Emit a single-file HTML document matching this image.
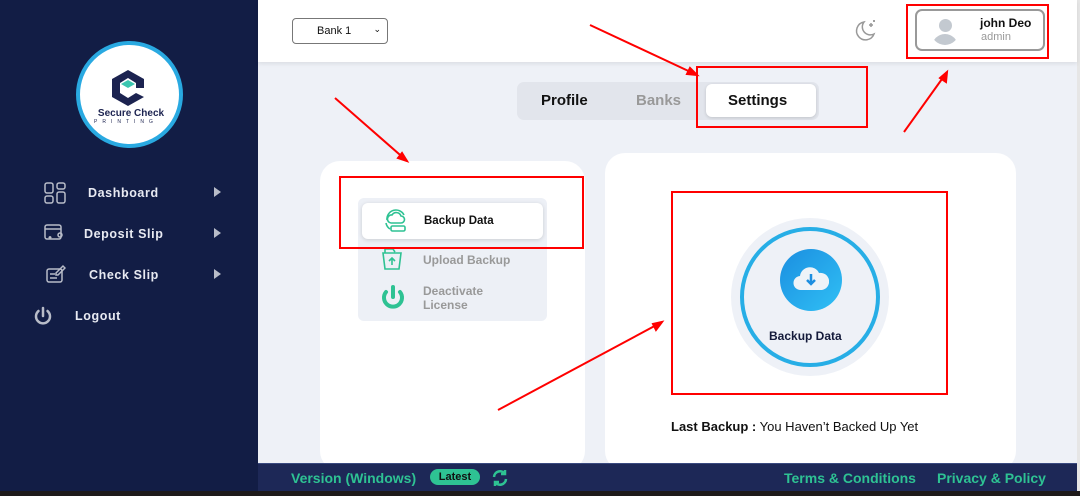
<!DOCTYPE html>
<html><head><style>
*{margin:0;padding:0;box-sizing:border-box}
body{width:1080px;height:496px;overflow:hidden;background:#eef1f7;font-family:"Liberation Sans",sans-serif;position:relative}
.abs{position:absolute}
.side{left:0;top:0;width:258px;height:496px;background:#121d45}
.nav{color:#e8eaf2;font-size:12.5px;font-weight:bold;letter-spacing:.6px}
.hdr{left:258px;top:0;width:819px;height:62px;background:#fff;box-shadow:0 2px 4px rgba(0,0,0,.08)}
.red{border:2px solid #f00}
.foot{left:258px;top:463px;width:819px;height:28px;background:#1d2857;border-top:1px solid #3a4a80}
.g{color:#2ec293;font-weight:bold;font-size:14px}
</style></head><body>
<div class="abs side">
 <div class="abs" style="left:76px;top:41px;width:107px;height:107px;border-radius:50%;background:#fff;border:4px solid #29a9e1"></div>
 <svg class="abs" style="left:108px;top:68px" width="40" height="40" viewBox="0 0 40 40"><polygon points="20,2 36,11 36,20 28,20 28,15 20,10 12,15 12,25 20,30 28,25 36,29 20,38 4,29 4,11" fill="#1c2350"/><polygon points="13,16 20,12 27,16 20,20" fill="#3bc6b0"/></svg>
 <div class="abs" style="left:81px;top:108px;width:100px;text-align:center;font-size:10px;font-weight:bold;color:#1c2350">Secure Check</div>
 <div class="abs" style="left:94px;top:119px;font-size:5px;letter-spacing:5px;color:#1c2350">PRINTING</div>
 <svg class="abs" style="left:44px;top:182px" width="22" height="22" viewBox="0 0 22 22" fill="none" stroke="#b8bcc8" stroke-width="1.5"><rect x="1" y="1" width="8" height="10" rx="2"/><rect x="13" y="1" width="8" height="6" rx="2"/><rect x="1" y="14" width="8" height="7" rx="2"/><rect x="13" y="10" width="8" height="11" rx="2"/></svg>
 <div class="abs nav" style="left:88px;top:186px">Dashboard</div>
 <svg class="abs" style="left:44px;top:224px" width="20" height="18" viewBox="0 0 20 18" fill="none" stroke="#b8bcc8" stroke-width="1.5"><rect x="1" y="1" width="16" height="14" rx="2"/><path d="M1 5h16M6 15v-3M4.5 13.5h3"/><circle cx="16" cy="11" r="2"/></svg>
 <div class="abs nav" style="left:84px;top:227px">Deposit Slip</div>
 <svg class="abs" style="left:46px;top:264px" width="20" height="20" viewBox="0 0 20 20" fill="none" stroke="#b8bcc8" stroke-width="1.5"><rect x="1" y="5" width="15" height="13" rx="2"/><path d="M4 10h5M4 14h7M10 9l7-7 2 2-7 7h-2z"/></svg>
 <div class="abs nav" style="left:89px;top:268px">Check Slip</div>
 <div class="abs" style="left:214px;top:187px;width:0;height:0;border-left:7px solid #b8bcc8;border-top:5px solid transparent;border-bottom:5px solid transparent"></div>
 <div class="abs" style="left:214px;top:228px;width:0;height:0;border-left:7px solid #b8bcc8;border-top:5px solid transparent;border-bottom:5px solid transparent"></div>
 <div class="abs" style="left:214px;top:269px;width:0;height:0;border-left:7px solid #b8bcc8;border-top:5px solid transparent;border-bottom:5px solid transparent"></div>
 <svg class="abs" style="left:34px;top:306px" width="18" height="20" viewBox="0 0 18 20" fill="none" stroke="#b8bcc8" stroke-width="2.5" stroke-linecap="round"><path d="M9 2v8M4.5 5a7 7 0 1 0 9 0"/></svg>
 <div class="abs nav" style="left:75px;top:309px">Logout</div>
</div>
<div class="abs" style="left:1077px;top:0;width:3px;height:496px;background:#e6e6e6"></div>
<div class="abs hdr">
 <div class="abs" style="left:34px;top:18px;width:96px;height:26px;border:1px solid #777;border-radius:4px;font-size:11px;padding:6px 0 0 24px;color:#111">Bank 1<span style="position:absolute;right:6px;top:5px;font-size:9px">&#8964;</span></div>
 <svg class="abs" style="left:596px;top:18px" width="24" height="24" viewBox="0 0 24 24" fill="none" stroke="#999" stroke-width="1.5"><path d="M10 4a9 9 0 1 0 10 12A8 8 0 0 1 10 4z"/><path d="M15 7h4M17 5v4M20 2v2M19 3h2"/></svg>
 <div class="abs" style="left:657px;top:9px;width:130px;height:42px;border:2px solid #999;border-radius:7px"></div>
 <div class="abs" style="left:673px;top:17px;width:28px;height:28px;border-radius:50%;overflow:hidden"><div class="abs" style="left:8px;top:2px;width:13px;height:13px;border-radius:50%;background:#c3c9d0"></div><div class="abs" style="left:1px;top:17px;width:26px;height:16px;border-radius:13px 13px 0 0;background:#c3c9d0"></div></div>
 <div class="abs" style="left:722px;top:16px;font-size:12px;font-weight:bold;color:#111">john Deo</div>
 <div class="abs" style="left:723px;top:31px;font-size:11px;color:#999">admin</div>
</div>
<div class="abs red" style="left:906px;top:4px;width:143px;height:55px"></div>
<div class="abs" style="left:517px;top:82px;width:302px;height:38px;background:#e2e5ec;border-radius:7px"></div>
<div class="abs" style="left:706px;top:84px;width:110px;height:33px;background:#fff;border-radius:6px;box-shadow:0 1px 3px rgba(0,0,0,.15)"></div>
<div class="abs" style="left:541px;top:92px;font-size:15px;font-weight:bold;color:#111">Profile</div>
<div class="abs" style="left:636px;top:92px;font-size:15px;font-weight:bold;color:#999">Banks</div>
<div class="abs" style="left:728px;top:92px;font-size:15px;font-weight:bold;color:#111">Settings</div>
<div class="abs red" style="left:696px;top:66px;width:172px;height:62px"></div>
<div class="abs" style="left:320px;top:161px;width:265px;height:310px;background:#fff;border-radius:20px"></div>
<div class="abs" style="left:605px;top:153px;width:411px;height:318px;background:#fff;border-radius:20px"></div>
<div class="abs" style="left:358px;top:198px;width:189px;height:123px;background:#edf0f6;border-radius:6px"></div>
<div class="abs" style="left:362px;top:203px;width:181px;height:36px;background:#fff;border-radius:6px;box-shadow:0 1px 4px rgba(0,0,0,.15)"></div>
<svg class="abs" style="left:383px;top:208px" width="26" height="26" viewBox="0 0 26 26" fill="none" stroke="#2ec293" stroke-width="1.6"><path d="M8 15a4 4 0 0 1 1-8 5 5 0 0 1 9 1 3.5 3.5 0 0 1 0 7z"/><path d="M4 12a9 9 0 0 1 17-5M3 15a9 9 0 0 0 4 6"/><rect x="8" y="18" width="14" height="5" rx="1.5"/></svg>
<div class="abs" style="left:424px;top:215px;font-size:11.5px;font-weight:bold;color:#111">Backup Data</div>
<svg class="abs" style="left:381px;top:247px" width="22" height="24" viewBox="0 0 22 24" fill="none" stroke="#2ec293" stroke-width="1.6"><path d="M2 6h18l-2 16H4zM4 6V2h8l2 3"/><path d="M11 18v-7M8 14l3-3 3 3"/></svg>
<div class="abs" style="left:423px;top:253px;font-size:12px;font-weight:bold;color:#999">Upload Backup</div>
<svg class="abs" style="left:380px;top:284px" width="26" height="28" viewBox="0 0 26 28" fill="none" stroke="#2ec293" stroke-width="4" stroke-linecap="round"><path d="M13 3v10M6 8a9 9 0 1 0 14 0"/></svg>
<div class="abs" style="left:423px;top:284px;font-size:12px;font-weight:bold;color:#999;line-height:14px">Deactivate<br>License</div>
<div class="abs red" style="left:339px;top:176px;width:245px;height:73px"></div>
<div class="abs" style="left:731px;top:218px;width:158px;height:158px;border-radius:50%;background:#eef1f7"></div>
<div class="abs" style="left:740px;top:227px;width:140px;height:140px;border-radius:50%;border:4px solid #27aee6;background:#eef1f7"></div>
<div class="abs" style="left:780px;top:249px;width:62px;height:62px;border-radius:50%;background:linear-gradient(135deg,#1b8ee0,#30c0f5)"></div>
<svg class="abs" style="left:793px;top:265px" width="36" height="28" viewBox="0 0 36 28"><path d="M8 25a7 7 0 0 1-1-14 10 10 0 0 1 19-3 8 8 0 0 1 3 17z" fill="#eef3f8"/><path d="M18 9v9M14 15l4 4 4-4" stroke="#1b8ee0" stroke-width="2.5" fill="none"/></svg>
<div class="abs" style="left:769px;top:329px;font-size:12px;font-weight:bold;color:#141a3a">Backup Data</div>
<div class="abs red" style="left:671px;top:191px;width:277px;height:204px"></div>
<div class="abs" style="left:671px;top:419px;font-size:13px;color:#111"><b>Last Backup :</b> You Haven’t Backed Up Yet</div>
<div class="abs foot">
 <div class="abs g" style="left:33px;top:6px">Version (Windows)</div>
 <div class="abs" style="left:172px;top:5px;width:50px;height:16px;border-radius:8px;background:#2ec293;color:#111;font-size:11px;font-weight:bold;text-align:center;line-height:16px">Latest</div>
 <svg class="abs" style="left:232px;top:4px" width="20" height="20" viewBox="0 0 20 20" fill="none" stroke="#2ec293" stroke-width="2.5"><path d="M4 9a6 6 0 0 1 11-3M16 11a6 6 0 0 1-11 3"/><path d="M15 2v4h-4M5 18v-4h4"/></svg>
 <div class="abs g" style="left:526px;top:6px">Terms &amp; Conditions</div>
 <div class="abs g" style="left:679px;top:6px">Privacy &amp; Policy</div>
</div>
<div class="abs" style="left:0;top:491px;width:1080px;height:5px;background:#1e1a1a"></div>
<svg class="abs" style="left:0;top:0" width="1080" height="496" viewBox="0 0 1080 496" fill="none" stroke="#f00" stroke-width="2">
 <path d="M590 25L697 75M335 98L407 161M904 132L947 72M498 410L662 322"/>
 <path d="M697 75l-10-1 3-6zM407 161l-9-3 4-5zM947 72l-1 10-6-4zM662 322l-6 8-3-6z" fill="#f00"/>
</svg>
</body></html>
